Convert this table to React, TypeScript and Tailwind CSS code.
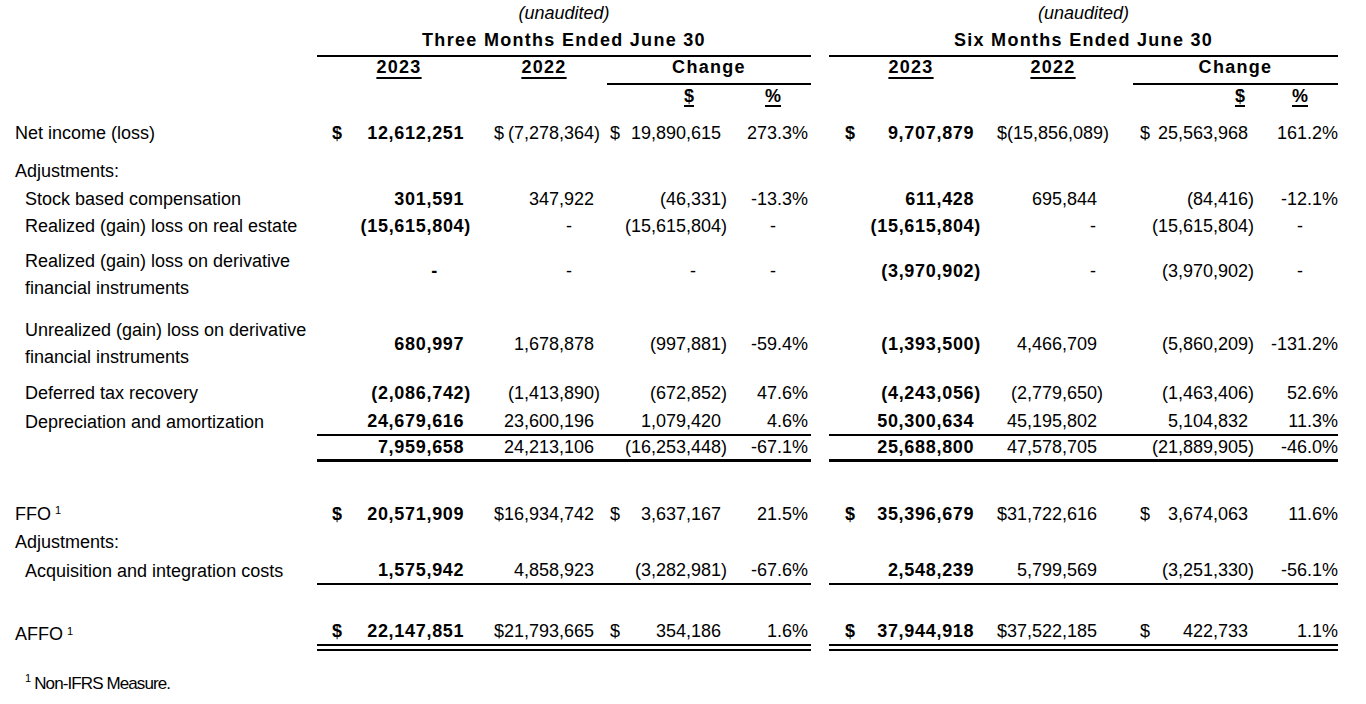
import type { ReactNode } from 'react'

type Val = string | { v: string; b?: boolean; d?: boolean }

interface Row {
  label?: ReactNode
  indent?: boolean
  cls: string
  line?: string
  shift?: string
  l?: Val[]
  r?: Val[]
}

// column boxes for the two period blocks (2023, 2022, change $, change %)
const COLS = {
  l: ['w-[164px] pl-[15px] pr-[10px]', 'w-[126px] pl-[13px] pr-[7px]', 'w-[133px] pl-[3px] pr-[13px]', 'w-[71px] pr-[3px]'],
  r: ['w-[164px] pl-[16px] pr-[12px]', 'w-[140px] pl-[4px] pr-[30px]', 'w-[135px] pl-[7px] pr-[14px]', 'w-[70px] pr-0'],
}

// where the "-" sits for an empty value
const DASH = {
  l: ['mr-[33px]', 'mr-[28px]', 'mr-[31px]', 'mr-[32px]'],
  r: ['mr-[30px]', 'mr-[7px]', 'mr-[30px]', 'mr-[35px]'],
}

const Sup = () => <sup className="ml-[4px] text-[11px]">1</sup>

const rows: Row[] = [
  {
    label: 'Net income (loss)',
    cls: 'mt-[12px] h-[26px]',
    l: [{ v: '12,612,251', b: true, d: true }, { v: '(7,278,364)', d: true }, { v: '19,890,615', d: true }, '273.3%'],
    r: [{ v: '9,707,879', b: true, d: true }, { v: '(15,856,089)', d: true }, { v: '25,563,968', d: true }, '161.2%'],
  },
  { label: 'Adjustments:', cls: 'mt-[12px] h-[26px]' },
  {
    label: 'Stock based compensation',
    indent: true,
    cls: 'mt-[2px] h-[26px]',
    l: [{ v: '301,591', b: true }, '347,922', '(46,331)', '-13.3%'],
    r: [{ v: '611,428', b: true }, '695,844', '(84,416)', '-12.1%'],
  },
  {
    label: 'Realized (gain) loss on real estate',
    indent: true,
    cls: 'mt-[1px] h-[26px]',
    l: [{ v: '(15,615,804)', b: true }, '-', '(15,615,804)', '-'],
    r: [{ v: '(15,615,804)', b: true }, '-', '(15,615,804)', '-'],
  },
  {
    label: (
      <>
        Realized (gain) loss on derivative
        <br />
        financial instruments
      </>
    ),
    indent: true,
    cls: 'mt-[9px] h-[54px]',
    shift: 'pb-[8px]',
    l: [{ v: '-', b: true }, '-', '-', '-'],
    r: [{ v: '(3,970,902)', b: true }, '-', '(3,970,902)', '-'],
  },
  {
    label: (
      <>
        Unrealized (gain) loss on derivative
        <br />
        financial instruments
      </>
    ),
    indent: true,
    cls: 'mt-[15px] h-[54px]',
    l: [{ v: '680,997', b: true }, '1,678,878', '(997,881)', '-59.4%'],
    r: [{ v: '(1,393,500)', b: true }, '4,466,709', '(5,860,209)', '-131.2%'],
  },
  {
    label: 'Deferred tax recovery',
    indent: true,
    cls: 'mt-[9px] h-[26px]',
    l: [{ v: '(2,086,742)', b: true }, '(1,413,890)', '(672,852)', '47.6%'],
    r: [{ v: '(4,243,056)', b: true }, '(2,779,650)', '(1,463,406)', '52.6%'],
  },
  {
    label: 'Depreciation and amortization',
    indent: true,
    cls: 'mt-[2px] h-[28px]',
    line: 'border-b-2 border-black',
    l: [{ v: '24,679,616', b: true }, '23,600,196', '1,079,420', '4.6%'],
    r: [{ v: '50,300,634', b: true }, '45,195,802', '5,104,832', '11.3%'],
  },
  {
    cls: 'h-[26px]',
    line: 'border-b-[3px] border-black',
    l: [{ v: '7,959,658', b: true }, '24,213,106', '(16,253,448)', '-67.1%'],
    r: [{ v: '25,688,800', b: true }, '47,578,705', '(21,889,905)', '-46.0%'],
  },
  {
    label: (
      <>
        FFO
        <Sup />
      </>
    ),
    cls: 'mt-[39px] h-[26px]',
    l: [{ v: '20,571,909', b: true, d: true }, { v: '16,934,742', d: true }, { v: '3,637,167', d: true }, '21.5%'],
    r: [{ v: '35,396,679', b: true, d: true }, { v: '31,722,616', d: true }, { v: '3,674,063', d: true }, '11.6%'],
  },
  { label: 'Adjustments:', cls: 'mt-[2px] h-[26px]' },
  {
    label: 'Acquisition and integration costs',
    indent: true,
    cls: 'mt-[2px] h-[28px]',
    line: 'border-b-2 border-black',
    l: [{ v: '1,575,942', b: true }, '4,858,923', '(3,282,981)', '-67.6%'],
    r: [{ v: '2,548,239', b: true }, '5,799,569', '(3,251,330)', '-56.1%'],
  },
  {
    label: (
      <>
        AFFO
        <Sup />
      </>
    ),
    cls: 'mt-[33px] h-[33px]',
    line: 'border-b-[7px] border-double border-black',
    l: [{ v: '22,147,851', b: true, d: true }, { v: '21,793,665', d: true }, { v: '354,186', d: true }, '1.6%'],
    r: [{ v: '37,944,918', b: true, d: true }, { v: '37,522,185', d: true }, { v: '422,733', d: true }, '1.1%'],
  },
]

function Cell({ val, col, dash, pct }: { val: Val; col: string; dash: string; pct: boolean }) {
  const c = typeof val === 'string' ? { v: val } : val
  const weight = c.b ? 'font-bold tracking-[0.7px]' : ''
  return (
    <div className={`flex h-full items-center justify-between ${col}`}>
      <span className={weight}>{c.d ? '$' : ''}</span>
      {c.v === '-' ? (
        <span className={`${weight} ${dash}`}>-</span>
      ) : (
        <span className={weight}>
          {c.v}
          {!pct && !c.v.endsWith(')') && <span className="invisible">)</span>}
        </span>
      )}
    </div>
  )
}

function Block({ side, vals, line, shift }: { side: 'l' | 'r'; vals?: Val[]; line?: string; shift?: string }) {
  const width = side === 'l' ? 'w-[494px]' : 'w-[509px]'
  return (
    <div className={`flex h-full ${width} ${line ?? ''} ${shift ?? ''}`}>
      {vals?.map((v, i) => (
        <Cell key={i} val={v} col={COLS[side][i]} dash={DASH[side][i]} pct={i === 3} />
      ))}
    </div>
  )
}

function PeriodHeader({ side, title }: { side: 'l' | 'r'; title: string }) {
  const width = side === 'l' ? 'w-[494px]' : 'w-[509px]'
  const cols = side === 'l' ? ['w-[164px]', 'w-[126px]', 'w-[204px]'] : ['w-[164px]', 'w-[140px] pr-[20px]', 'w-[205px]']
  const sign = side === 'l' ? ['w-[133px] pr-[46px]', 'w-[71px] pr-[30px]'] : ['w-[135px] pr-[9px]', 'w-[70px] pr-[16px]']
  return (
    <div className={`flex flex-col ${width}`}>
      <div className="flex h-[27px] items-center justify-center italic">(unaudited)</div>
      <div className="flex h-[30px] items-center justify-center border-b-2 border-black pb-[2px] font-bold tracking-[1.3px]">
        {title}
      </div>
      <div className="flex h-[28px] font-bold leading-[20px] tracking-[1.3px]">
        <div className={`${cols[0]} text-center`}>
          <span className="underline decoration-2 underline-offset-[4px]">2023</span>
        </div>
        <div className={`${cols[1]} text-center`}>
          <span className="underline decoration-2 underline-offset-[4px]">2022</span>
        </div>
        <div className={`${cols[2]} border-b-2 border-black text-center`}>Change</div>
      </div>
      <div className="flex h-[23px] items-center font-bold">
        <div className="w-[290px] shrink-0" />
        <div className={`${sign[0]} shrink-0 text-right`}>
          <span className="underline decoration-2 underline-offset-[3px]">$</span>
        </div>
        <div className={`${sign[1]} shrink-0 text-right`}>
          <span className="underline decoration-2 underline-offset-[3px]">%</span>
        </div>
      </div>
    </div>
  )
}

export default function App() {
  return (
    <div className="h-[704px] w-[1366px] overflow-hidden bg-white font-['Liberation_Sans',Arial,sans-serif] text-[18px] leading-[27px] text-black">
      {/* column headings */}
      <div className="flex">
        <div className="w-[317px] shrink-0" />
        <div className="flex gap-[18px]">
          <PeriodHeader side="l" title="Three Months Ended June 30" />
          <PeriodHeader side="r" title="Six Months Ended June 30" />
        </div>
      </div>

      {rows.map((row, i) => (
        <div key={i} className={`flex ${row.cls}`}>
          <div className={`flex w-[317px] shrink-0 items-center ${row.indent ? 'pl-[25px]' : 'pl-[15px]'}`}>
            <div>{row.label}</div>
          </div>
          <div className="flex gap-[18px]">
            <Block side="l" vals={row.l} line={row.line} shift={row.shift} />
            <Block side="r" vals={row.r} line={row.line} shift={row.shift} />
          </div>
        </div>
      ))}

      <div className="mt-[19px] flex h-[26px] items-center pl-[25px] text-[17px] tracking-[-0.9px]">
        <sup className="mr-[4px] text-[11px]">1</sup>
        Non-IFRS Measure.
      </div>
    </div>
  )
}
